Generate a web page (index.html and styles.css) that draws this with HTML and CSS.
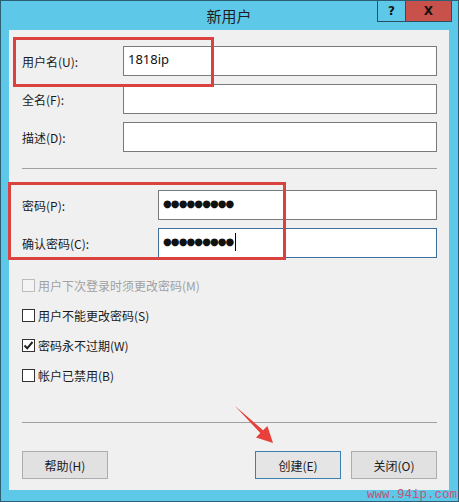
FILE: index.html
```html
<!DOCTYPE html>
<html lang="zh-CN">
<head>
<meta charset="utf-8">
<title>新用户</title>
<link rel="stylesheet" href="styles.css">
</head>
<body>
<div class="window">
  <div class="titlebar">
    <span class="title">新用户</span>
  </div>
  <div class="caption-btns">
    <span class="cbtn help">?</span>
    <span class="cbtn close">X</span>
  </div>
  <div class="content">
    <div class="group group1">
      <label class="lbl">用户名(U):</label>
      <div class="input"><span class="val">1818ip</span></div>
      <label class="lbl">全名(F):</label>
      <div class="input"></div>
      <label class="lbl">描述(D):</label>
      <div class="input"></div>
    </div>
    <div class="sep sep1"></div>
    <div class="group group2">
      <label class="lbl">密码(P):</label>
      <div class="input"><span class="dots">●●●●●●●●●</span></div>
      <label class="lbl">确认密码(C):</label>
      <div class="input focused"><span class="dots">●●●●●●●●●</span><span class="caret"></span></div>
    </div>
    <div class="checks">
      <div class="check disabled"><span class="box"></span><span>用户下次登录时须更改密码(M)</span></div>
      <div class="check"><span class="box"></span><span>用户不能更改密码(S)</span></div>
      <div class="check"><span class="box"><svg viewBox="0 0 11 11" width="11" height="11"><path d="M1.5 5.5 L4.2 8.3 L9.5 2" fill="none" stroke="#222" stroke-width="2"/></svg></span><span>密码永不过期(W)</span></div>
      <div class="check"><span class="box"></span><span>帐户已禁用(B)</span></div>
    </div>
    <div class="sep sep2"></div>
    <div class="buttons">
      <button class="btn">帮助(H)</button>
      <span class="spacer"></span>
      <button class="btn default">创建(E)</button>
      <button class="btn">关闭(O)</button>
    </div>
  </div>
  <div class="mark mark1"></div>
  <div class="mark mark2"></div>
  <svg class="arrow" width="459" height="502" viewBox="0 0 459 502"><polygon points="235,406 263.1,430.3 267.4,426 273,443 256,437.4 260.3,433.1" fill="#e8403a"/></svg>
  <div class="watermark">www.94ip.com</div>
</div>
</body>
</html>
```

FILE: styles.css
```css
html, body {
  margin: 0;
  padding: 0;
  background: #ffffff;
}
body {
  font-family: "Noto Sans CJK SC", "Noto Sans", sans-serif;
  font-size: 12px;
  color: #1a1a1a;
}
.window {
  position: relative;
  width: 459px;
  height: 502px;
  box-sizing: border-box;
  background: #5ec8e8;
  border: 1px solid #2c5f73;
  padding: 0 9px 11px 8px;
  display: flex;
  flex-direction: column;
  overflow: hidden;
}
.titlebar {
  height: 29px;
  display: flex;
  align-items: center;
  justify-content: center;
  flex: none;
}
.title {
  font-size: 15px;
  color: #1e1e1e;
  margin-top: -1px;
}
.caption-btns {
  position: absolute;
  top: -1px;
  right: 6px;
  display: flex;
  height: 22px;
}
.cbtn {
  display: flex;
  align-items: center;
  justify-content: center;
  box-sizing: border-box;
  height: 22px;
  border: 1px solid #2b4f60;
  font-family: "DejaVu Sans", sans-serif;
  font-weight: bold;
  font-size: 12px;
  color: #111;
}
.cbtn.help {
  width: 28px;
  background: #5ec8e8;
  border-right: none;
}
.cbtn.close {
  width: 47px;
  background: #c9514b;
}
.content {
  flex: 1;
  background: #f0f0f0;
  padding: 16px 12px 11px 13px;
  display: flex;
  flex-direction: column;
}
.group {
  display: grid;
  grid-auto-rows: 30px;
  row-gap: 8px;
  align-items: center;
}
.group1 {
  grid-template-columns: 101px 1fr;
}
.group2 {
  grid-template-columns: 136px 1fr;
}
.lbl {
  color: #1a1a1a;
  font-size: 12px;
}
.input {
  height: 30px;
  box-sizing: border-box;
  background: #ffffff;
  border: 1px solid #7a7a7a;
  padding: 3px 4px 0 4px;
  display: flex;
  align-items: flex-start;
  font-family: "Noto Sans", sans-serif;
  font-size: 13px;
  color: #111;
}
.input.focused {
  border-color: #3f6f9c;
}
.val {
  line-height: 18px;
}
.dots {
  font-family: "DejaVu Sans", sans-serif;
  font-size: 10px;
  letter-spacing: -0.9px;
  line-height: 20px;
}
.caret {
  display: inline-block;
  width: 1px;
  height: 18px;
  margin-top: 1px;
  margin-left: 2px;
  background: #000;
}
.sep {
  height: 1px;
  background: #a0a0a0;
}
.sep1 {
  margin: 16px 0 21px 0;
}
.checks {
  margin-top: 12px;
  display: flex;
  flex-direction: column;
}
.check {
  height: 30px;
  display: flex;
  align-items: center;
  gap: 3px;
  color: #1a1a1a;
}
.box {
  width: 13px;
  height: 13px;
  box-sizing: border-box;
  border: 1px solid #333;
  background: #fff;
  display: flex;
  align-items: center;
  justify-content: center;
}
.check.disabled {
  color: #a0a0a0;
}
.check.disabled .box {
  border-color: #bcbcbc;
  background: #f4f4f4;
}
.sep2 {
  margin-top: 32px;
}
.buttons {
  margin-top: 28px;
  display: flex;
  gap: 10px;
}
.spacer {
  flex: 1;
}
.btn {
  width: 86px;
  height: 28px;
  box-sizing: border-box;
  background: #e1e1e1;
  border: 1px solid #adadad;
  font-family: "Noto Sans CJK SC", "Noto Sans", sans-serif;
  font-size: 12px;
  color: #1a1a1a;
  padding: 0;
}
.btn.default {
  border-color: #3c7fb1;
  background: #e5e5e5;
}
.mark {
  position: absolute;
  border: 3px solid #d9423f;
  box-sizing: border-box;
  pointer-events: none;
}
.mark1 {
  left: 12px;
  top: 36px;
  width: 201px;
  height: 50px;
}
.mark2 {
  left: 7px;
  top: 181px;
  width: 278px;
  height: 78px;
}
.arrow {
  position: absolute;
  left: -1px;
  top: -1px;
  pointer-events: none;
}
.watermark {
  position: absolute;
  right: 1px;
  bottom: -1px;
  line-height: 13px;
  font-family: "Liberation Mono", monospace;
  font-size: 12.5px;
  color: #c4557a;
}
```
